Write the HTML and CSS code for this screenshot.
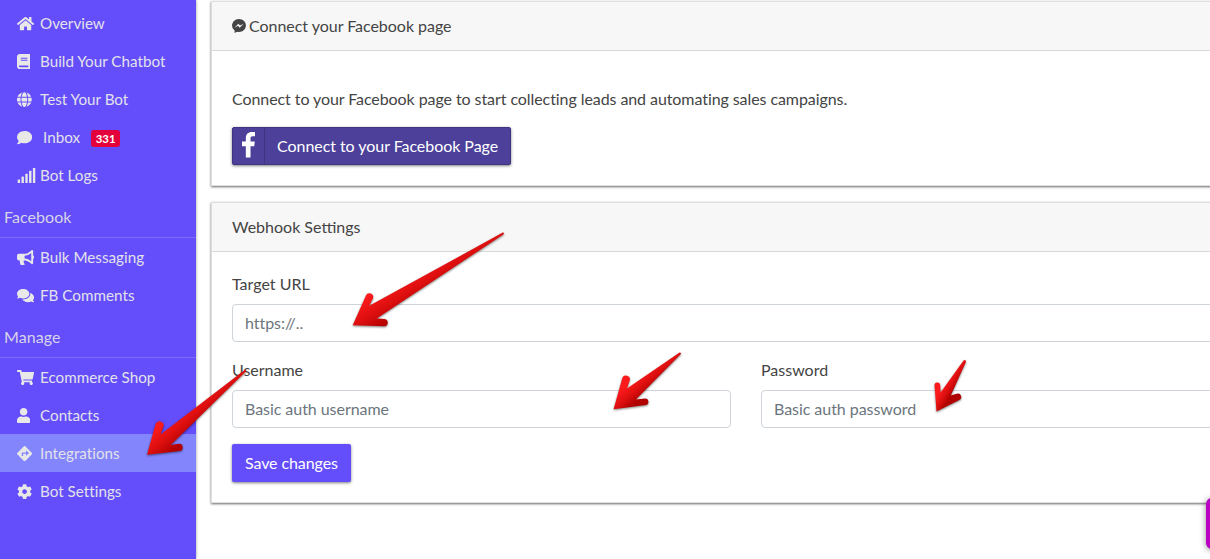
FILE: index.html
```html
<!DOCTYPE html>
<html lang="en">
<head>
<meta charset="utf-8">
<title>Integrations</title>
<link rel="stylesheet" href="styles.css">
</head>
<body>
<div class="app">
  <nav class="sidebar">
    <a class="item"><svg class="icon" viewBox="0 0 576 512"><path d="M280.37 148.26L96 300.11V464a16 16 0 0 0 16 16l112.06-.29a16 16 0 0 0 15.92-16V368a16 16 0 0 1 16-16h64a16 16 0 0 1 16 16v95.64a16 16 0 0 0 16 16.05L464 480a16 16 0 0 0 16-16V300L295.67 148.26a12.19 12.19 0 0 0-15.3 0zM571.6 251.47L488 182.56V44.05a12 12 0 0 0-12-12h-56a12 12 0 0 0-12 12v72.61L318.47 43a48 48 0 0 0-61 0L4.34 251.47a12 12 0 0 0-1.6 16.9l25.5 31A12 12 0 0 0 45.15 301l235.22-193.74a12.19 12.19 0 0 1 15.3 0L530.9 301a12 12 0 0 0 16.9-1.6l25.5-31a12 12 0 0 0-1.7-16.93z"/></svg><span>Overview</span></a>
    <a class="item"><svg class="icon" viewBox="0 0 448 512"><path d="M448 360V24c0-13.3-10.7-24-24-24H96C43 0 0 43 0 96v320c0 53 43 96 96 96h328c13.3 0 24-10.7 24-24v-16c0-7.5-3.5-14.3-8.9-18.7-4.2-15.4-4.2-59.3 0-74.7 5.4-4.3 8.9-11.1 8.9-18.6zM128 134c0-3.3 2.7-6 6-6h212c3.3 0 6 2.7 6 6v20c0 3.3-2.7 6-6 6H134c-3.3 0-6-2.7-6-6v-20zm0 64c0-3.3 2.7-6 6-6h212c3.3 0 6 2.7 6 6v20c0 3.3-2.7 6-6 6H134c-3.3 0-6-2.7-6-6v-20zm253.4 250H96c-17.7 0-32-14.3-32-32 0-17.6 14.4-32 32-32h285.4c-1.9 17.1-1.9 46.9 0 64z"/></svg><span>Build Your Chatbot</span></a>
    <a class="item"><svg class="icon" viewBox="0 0 496 512"><path d="M336.5 160C322 70.7 287.8 8 248 8s-74 62.7-88.5 152h177zM152 256c0 22.2 1.2 43.5 3.3 64h185.3c2.1-20.5 3.3-41.8 3.3-64s-1.2-43.5-3.3-64H155.3c-2.1 20.5-3.3 41.8-3.3 64zm324.7-96c-28.6-67.9-86.5-120.4-158-141.6 24.4 33.8 41.2 84.7 50 141.6h108zM177.2 18.4C105.8 39.6 47.8 92.1 19.3 160h108c8.7-56.9 25.5-107.8 49.9-141.6zM487.4 192H372.7c2.1 21 3.3 42.5 3.3 64s-1.2 43-3.3 64h114.6c5.5-20.5 8.6-41.8 8.6-64s-3.1-43.5-8.5-64zM120 256c0-21.5 1.2-43 3.3-64H8.6C3.2 212.5 0 233.8 0 256s3.2 43.5 8.6 64h114.6c-2-21-3.2-42.5-3.2-64zm39.5 96c14.5 89.3 48.7 152 88.5 152s74-62.7 88.5-152h-177zm159.3 141.6c71.4-21.2 129.4-73.7 158-141.6h-108c-8.8 56.9-25.6 107.8-50 141.6zM19.3 352c28.6 67.9 86.5 120.4 158 141.6-24.4-33.8-41.2-84.7-50-141.6h-108z"/></svg><span>Test Your Bot</span></a>
    <a class="item item-inbox"><svg class="icon" viewBox="0 0 512 512"><path d="M256 32C114.6 32 0 125.1 0 240c0 49.6 21.4 95 57 130.7C44.5 421.1 2.7 466 2.2 466.5c-2.2 2.3-2.8 5.7-1.5 8.7S4.8 480 8 480c66.3 0 116-31.8 140.6-51.4 32.7 12.3 69 19.4 107.4 19.4 141.4 0 256-93.1 256-208S397.4 32 256 32z"/></svg><span>Inbox</span><span class="badge">331</span></a>
    <a class="item"><svg class="icon" viewBox="0 0 640 512"><rect x="24" y="384" width="80" height="128" rx="16"/><rect x="152" y="288" width="80" height="224" rx="16"/><rect x="280" y="192" width="80" height="320" rx="16"/><rect x="408" y="96" width="80" height="416" rx="16"/><rect x="536" y="0" width="80" height="512" rx="16"/></svg><span>Bot Logs</span></a>
    <div class="heading">Facebook</div>
    <a class="item"><svg class="icon" viewBox="0 0 576 512"><path d="M576 240c0-23.63-12.95-44.04-32-55.12V32.01C544 23.26 537.02 0 512 0c-7.12 0-14.19 2.38-19.98 7.02l-85.03 68.03C364.28 109.19 310.66 128 256 128H64c-35.35 0-64 28.65-64 64v96c0 35.35 28.65 64 64 64h33.7c-1.39 10.48-2.18 21.14-2.18 32 0 39.77 9.26 77.35 25.56 110.94 5.19 10.69 16.52 17.06 28.4 17.06h74.28c26.05 0 41.69-29.84 25.9-50.56-16.4-21.52-26.15-48.36-26.15-77.44 0-11.11 1.62-21.79 4.41-32H256c54.66 0 108.28 18.81 150.98 52.95l85.03 68.03a32.023 32.023 0 0 0 19.98 7.02c24.92 0 32-22.78 32-32V295.13C563.05 284.04 576 263.63 576 240zm-96 141.42l-33.05-26.44C392.95 311.78 325.12 288 256 288v-96c69.12 0 136.95-23.78 190.95-66.98L480 98.58v282.84z"/></svg><span>Bulk Messaging</span></a>
    <a class="item"><svg class="icon" viewBox="0 0 576 512"><path d="M416 192c0-88.4-93.1-160-208-160S0 103.6 0 192c0 34.3 14.1 65.9 38 92-13.4 30.2-35.5 54.2-35.8 54.5-2.2 2.3-2.8 5.7-1.5 8.7S4.8 352 8 352c36.6 0 66.9-12.3 88.7-25 32.2 15.7 70.3 25 111.3 25 114.9 0 208-71.6 208-160zm122 220c23.9-26 38-57.7 38-92 0-66.9-53.5-124.2-129.3-148.1.9 6.6 1.3 13.3 1.3 20.1 0 105.9-107.7 192-240 192-10.8 0-21.3-.8-31.7-1.9C207.8 439.6 281.8 480 368 480c41 0 79.1-9.2 111.3-25 21.8 12.7 52.1 25 88.7 25 3.2 0 6.1-1.9 7.3-4.8 1.3-2.9.7-6.3-1.5-8.7-.3-.3-22.4-24.2-35.8-54.5z"/></svg><span>FB Comments</span></a>
    <div class="heading">Manage</div>
    <a class="item"><svg class="icon" viewBox="0 0 576 512"><path d="M528.12 301.319l47.273-208C578.806 78.301 567.391 64 551.99 64H159.208l-9.166-44.81C147.758 8.021 137.93 0 126.529 0H24C10.745 0 0 10.745 0 24v16c0 13.255 10.745 24 24 24h69.883l70.248 343.435C147.325 417.1 136 435.222 136 456c0 30.928 25.072 56 56 56s56-25.072 56-56c0-15.674-6.447-29.835-16.824-40h209.647C430.447 426.165 424 440.326 424 456c0 30.928 25.072 56 56 56s56-25.072 56-56c0-22.172-12.888-41.332-31.579-50.405l5.517-24.276c3.413-15.018-8.002-29.319-23.403-29.319H218.117l-6.545-32h293.145c11.206 0 20.92-7.754 23.403-18.681z"/></svg><span>Ecommerce Shop</span></a>
    <a class="item"><svg class="icon" viewBox="0 0 448 512"><path d="M224 256c70.7 0 128-57.3 128-128S294.7 0 224 0 96 57.3 96 128s57.3 128 128 128zm89.6 32h-16.7c-22.2 10.2-46.9 16-72.9 16s-50.6-5.8-72.9-16h-16.7C60.2 288 0 348.2 0 422.4V464c0 26.5 21.5 48 48 48h352c26.5 0 48-21.5 48-48v-41.6c0-74.2-60.2-134.4-134.4-134.4z"/></svg><span>Contacts</span></a>
    <a class="item item-active"><svg class="icon" viewBox="0 0 512 512"><path d="M502.61 233.32L278.68 9.39c-12.52-12.52-32.83-12.52-45.36 0L9.39 233.32c-12.52 12.53-12.52 32.83 0 45.36l223.93 223.93c12.52 12.53 32.83 12.53 45.36 0l223.93-223.93c12.52-12.53 12.52-32.83 0-45.36zm-100.98 12.56l-84.21 77.73c-5.12 4.73-13.43 1.1-13.43-5.88V264h-96v64c0 4.42-3.58 8-8 8h-32c-4.42 0-8-3.58-8-8v-80c0-17.67 14.33-32 32-32h112v-53.73c0-6.97 8.3-10.61 13.43-5.88l84.21 77.73c3.43 3.17 3.43 8.59 0 11.76z"/></svg><span>Integrations</span></a>
    <a class="item"><svg class="icon" viewBox="0 0 512 512"><path d="M487.4 315.7l-42.6-24.6c4.3-23.2 4.3-47 0-70.2l42.6-24.6c4.9-2.8 7.1-8.6 5.5-14-11.1-35.6-30-67.8-54.7-94.6-3.8-4.1-10-5.1-14.8-2.3L380.8 110c-17.9-15.4-38.5-27.3-60.8-35.1V25.8c0-5.6-3.9-10.5-9.4-11.7-36.7-8.2-74.3-7.8-109.2 0-5.5 1.2-9.4 6.1-9.4 11.7V75c-22.2 7.9-42.8 19.8-60.8 35.1L88.7 85.5c-4.9-2.8-11-1.9-14.8 2.3-24.7 26.7-43.6 58.9-54.7 94.6-1.7 5.4.6 11.2 5.5 14L67.3 221c-4.3 23.2-4.3 47 0 70.2l-42.6 24.6c-4.9 2.8-7.1 8.6-5.5 14 11.1 35.6 30 67.8 54.7 94.6 3.8 4.1 10 5.1 14.8 2.3l42.6-24.6c17.9 15.4 38.5 27.3 60.8 35.1v49.2c0 5.6 3.9 10.5 9.4 11.7 36.7 8.2 74.3 7.8 109.2 0 5.5-1.2 9.4-6.1 9.4-11.7v-49.2c22.2-7.9 42.8-19.8 60.8-35.1l42.6 24.6c4.9 2.8 11 1.9 14.8-2.3 24.7-26.7 43.6-58.9 54.7-94.6 1.5-5.5-.7-11.3-5.6-14.1zM256 336c-44.1 0-80-35.9-80-80s35.9-80 80-80 80 35.9 80 80-35.9 80-80 80z"/></svg><span>Bot Settings</span></a>
  </nav>

  <main class="content">
    <section class="card">
      <header class="card-header"><svg class="messenger" viewBox="0 0 448 512"><path d="M224 32C15.9 32-77.5 278 84.6 400.6V480l75.7-42c142.2 39.8 285.4-59.9 285.4-198.7C445.8 124.8 346.5 32 224 32zm23.4 278.1L190 250.5 79.6 311.6l121.1-128.5 57.4 59.6 110.4-61.1-121.1 128.5z"/></svg><span class="title">Connect your Facebook page</span></header>
      <div class="card-body card-body-connect">
        <p class="lead">Connect to your Facebook page to start collecting leads and automating sales campaigns.</p>
        <button class="btn btn-facebook"><span class="btn-logo"><svg viewBox="0 0 264 512"><path d="M76.7 512V283H0v-91h76.7v-71.7C76.7 42.4 124.3 0 193.8 0c33.3 0 61.9 2.5 70.2 3.6V85h-48.2c-37.8 0-45.1 18-45.1 44.3V192H256l-11.7 91h-73.6v229"/></svg></span><span class="btn-label">Connect to your Facebook Page</span></button>
      </div>
    </section>

    <section class="card">
      <header class="card-header">Webhook Settings</header>
      <form class="card-body">
        <div class="group">
          <label class="label" for="url">Target URL</label>
          <input class="input" id="url" type="text" placeholder="https://..">
        </div>
        <div class="row">
          <div class="group">
            <label class="label" for="user">Username</label>
            <input class="input" id="user" type="text" placeholder="Basic auth username">
          </div>
          <div class="group">
            <label class="label" for="pass">Password</label>
            <input class="input" id="pass" type="text" placeholder="Basic auth password">
          </div>
        </div>
        <button class="btn btn-save" type="button">Save changes</button>
      </form>
    </section>
  </main>

  <div class="chat-tab"></div>

  <svg class="arrows" viewBox="0 0 1210 559">
    <defs>
      <linearGradient id="red" x1="0.39" y1="0.39" x2="0.61" y2="0.61">
        <stop offset="0" stop-color="#fb1a1c"/>
        <stop offset="0.5" stop-color="#de0f0f"/>
        <stop offset="1" stop-color="#b00000"/>
      </linearGradient>
    </defs>
    <path d="M352.7 325.2L366 295.6A3.7 3.7 0 0 1 372.9 298.4L369.3 305.8L502.8 232.6Q504.4 232.6 503.7 234.2L376.8 318.4L384.8 318.9A3.7 3.7 0 0 1 384.4 326.2Z"/>
    <path d="M147 454.7L155.6 424A4.2 4.2 0 0 1 163.7 425.6L160.6 434.4L245 369.8Q246.6 369.8 246.1 371.2L170.7 444.9L178.6 443.7A3.6 3.6 0 0 1 179.4 451Z"/>
    <path d="M613.6 409.2L622.2 378.5A3.8 3.8 0 0 1 629.7 380.6L627 388.4L679.6 352.4Q681.5 352.3 680.9 354L635.9 399.6L645.2 398.4A3.4 3.4 0 0 1 645.8 405.1Z"/>
    <path d="M936.5 411.6L934.6 385.8A2.8 2.8 0 0 1 940.2 385L940.6 392.4L963.6 360.6Q965.8 359.2 966 361.8L950.8 395.4L956.8 393.8A3.3 3.3 0 0 1 959.3 399.9Z"/>
  </svg>
</div>
</body>
</html>
```
FILE: styles.css
```css
* {
  box-sizing: border-box;
}

body {
  margin: 0;
  background: #fff;
  color: #444;
  font-family: Lato, "Liberation Sans", sans-serif;
  font-size: 16px;
  line-height: 24px;
}

.app {
  position: relative;
  display: flex;
  width: 1210px;
  height: 559px;
  overflow: hidden;
}

.sidebar {
  flex: none;
  width: 196px;
  height: 559px;
  padding-top: 4px;
  background: #644dfa;
  color: #e2e2ea;
  font-size: 15.2px;
  box-shadow: 0 0 3px rgba(0, 0, 0, 0.4);
}

.item {
  display: grid;
  grid-template-columns: 23px auto;
  align-items: center;
  justify-content: start;
  height: 38px;
  padding-left: 17px;
  letter-spacing: 0.02px;
}

.item-inbox {
  grid-template-columns: 26px auto auto;
}

.item-active {
  background: #8385fd;
}

.icon {
  height: 15.2px;
  margin-top: 1.2px;
  fill: #e8e8e8;
}

.badge {
  margin: 2px 0 0 11px;
  padding: 0 4.6px;
  border-radius: 3px;
  background: #e4003a;
  color: #fff;
  font-size: 11.4px;
  font-weight: 700;
  line-height: 17px;
}

.heading {
  height: 44px;
  padding: 11px 4px 0;
  border-bottom: 1px solid #7d6bfc;
  color: #d6d4e8;
  font-size: 16px;
  letter-spacing: 0.05px;
}

.content {
  flex: none;
  width: 1070px;
  margin: 1px 0 0 15px;
}

.card {
  margin-bottom: 16px;
  border: 1px solid #dfdfdf;
  background: #fff;
  box-shadow: 0 1px 3px rgba(0, 0, 0, 0.12), 0 1px 2px rgba(0, 0, 0, 0.5);
}

.card-header {
  display: flex;
  align-items: center;
  gap: 3px;
  height: 49px;
  padding: 0 20px;
  border-bottom: 1px solid #d9d9d9;
  background: #f7f7f7;
}

.title {
  letter-spacing: -0.03px;
}

.messenger {
  width: 14px;
  height: 16px;
  fill: #444;
}

.card-body {
  padding: 20px;
}

.card-body-connect {
  padding-top: 36px;
}

.lead {
  margin: 0 0 16px;
  letter-spacing: -0.076px;
}

.btn {
  display: flex;
  align-items: center;
  height: 38px;
  padding: 0;
  border: 0;
  border-radius: 2px;
  color: #fff;
  font: inherit;
  box-shadow: 0 1px 3px rgba(0, 0, 0, 0.5);
}

.btn-facebook {
  width: 279px;
  border: 1px solid #3e3482;
  background: #4c409a;
}

.btn-logo {
  display: flex;
  align-items: center;
  justify-content: center;
  width: 32px;
  height: 36px;
  padding-bottom: 2px;
  border-right: 1px solid #3e3482;
}

.btn-logo svg {
  height: 25.6px;
  fill: #fff;
}

.btn-label {
  padding-left: 12px;
  letter-spacing: -0.05px;
}

.btn-save {
  width: 119px;
  padding: 0 13px;
  background: #644dfa;
  letter-spacing: -0.09px;
  white-space: nowrap;
}

.group {
  margin-bottom: 16px;
}

.label {
  display: block;
  margin-bottom: 8px;
}

.input {
  display: block;
  width: 100%;
  height: 38px;
  padding: 5px 12px 7px;
  border: 1px solid #ced4da;
  border-radius: 4px;
  background: #fff;
  font: inherit;
  letter-spacing: -0.05px;
}

.input::placeholder {
  color: #6c757d;
  opacity: 1;
}

.row {
  display: grid;
  grid-template-columns: 1fr 1fr;
  gap: 30px;
}

.chat-tab {
  position: absolute;
  top: 498px;
  left: 1206px;
  width: 40px;
  height: 51px;
  border-radius: 6px;
  background: #b900c4;
  box-shadow: 0 1px 6px rgba(0, 0, 0, 0.45);
}

.arrows {
  position: absolute;
  inset: 0;
  width: 1210px;
  height: 559px;
  fill: url(#red);
  filter: drop-shadow(0.5px 1.5px 1.2px rgba(0, 0, 0, 0.5));
  pointer-events: none;
}
```
